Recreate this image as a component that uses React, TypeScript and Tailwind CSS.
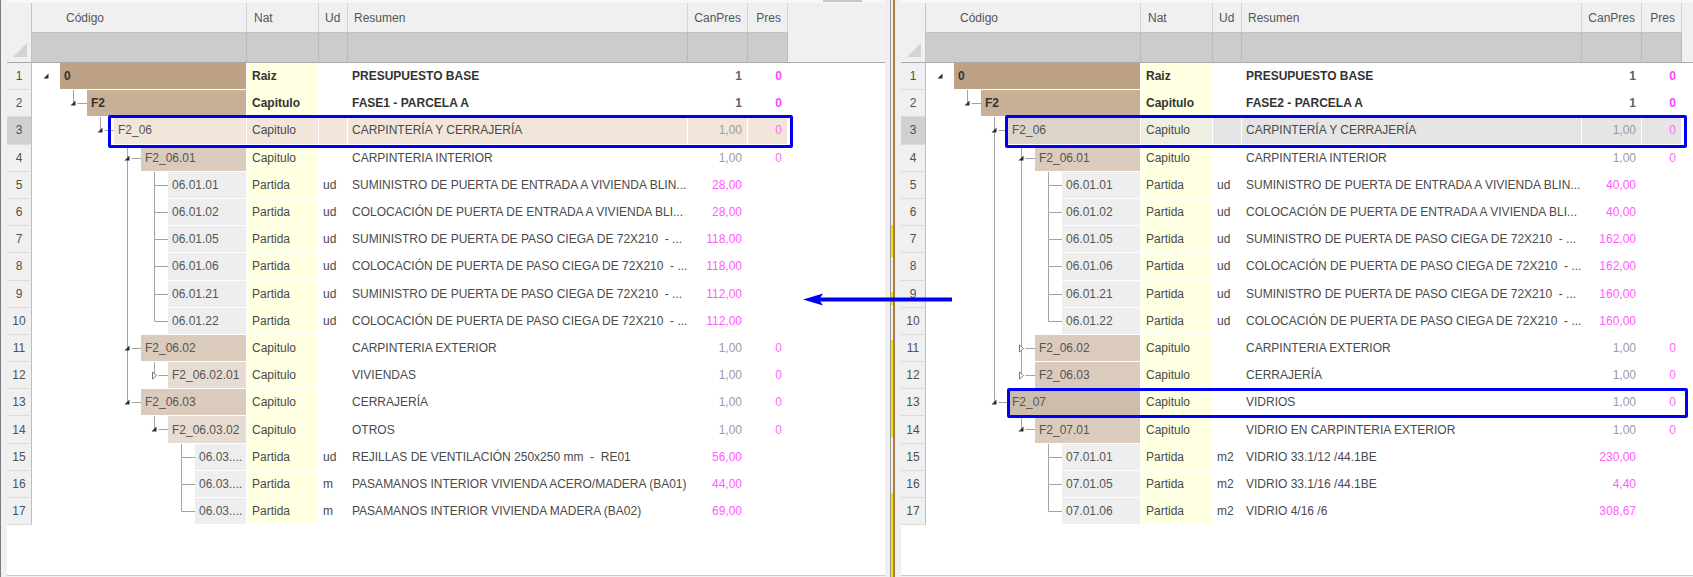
import React from "react";

type Row = {
  n: number;
  level: number;
  code: string;
  nat: string;
  ud?: string;
  res: string;
  can: string;
  pres?: string;
  part?: boolean;
  bold?: boolean;
  exp?: "open" | "closed";
  sel?: boolean;
};

const partidas = (
  level: number,
  start: number,
  items: [string, string, string, string][]
): Row[] =>
  items.map(([code, ud, res, can], i) => ({
    n: start + i,
    level,
    code,
    nat: "Partida",
    ud,
    res,
    can,
    part: true,
  }));

const puertas = (vals: string[]): [string, string, string, string][] => [
  ["06.01.01", "ud", "SUMINISTRO DE PUERTA DE ENTRADA A VIVIENDA BLIN...", vals[0]],
  ["06.01.02", "ud", "COLOCACIÓN DE PUERTA DE ENTRADA A VIVIENDA BLI...", vals[1]],
  ["06.01.05", "ud", "SUMINISTRO DE PUERTA DE PASO CIEGA DE 72X210  - ...", vals[2]],
  ["06.01.06", "ud", "COLOCACIÓN DE PUERTA DE PASO CIEGA DE 72X210  - ...", vals[3]],
  ["06.01.21", "ud", "SUMINISTRO DE PUERTA DE PASO CIEGA DE 72X210  - ...", vals[4]],
  ["06.01.22", "ud", "COLOCACIÓN DE PUERTA DE PASO CIEGA DE 72X210  - ...", vals[5]],
];

const leftRows: Row[] = [
  { n: 1, level: 0, code: "0", nat: "Raiz", res: "PRESUPUESTO BASE", can: "1", pres: "0", bold: true, exp: "open" },
  { n: 2, level: 1, code: "F2", nat: "Capitulo", res: "FASE1 - PARCELA A", can: "1", pres: "0", bold: true, exp: "open" },
  { n: 3, level: 2, code: "F2_06", nat: "Capitulo", res: "CARPINTERÍA Y CERRAJERÍA", can: "1,00", pres: "0", exp: "open", sel: true },
  { n: 4, level: 3, code: "F2_06.01", nat: "Capitulo", res: "CARPINTERIA INTERIOR", can: "1,00", pres: "0", exp: "open" },
  ...partidas(4, 5, puertas(["28,00", "28,00", "118,00", "118,00", "112,00", "112,00"])),
  { n: 11, level: 3, code: "F2_06.02", nat: "Capitulo", res: "CARPINTERIA EXTERIOR", can: "1,00", pres: "0", exp: "open" },
  { n: 12, level: 4, code: "F2_06.02.01", nat: "Capitulo", res: "VIVIENDAS", can: "1,00", pres: "0", exp: "closed" },
  { n: 13, level: 3, code: "F2_06.03", nat: "Capitulo", res: "CERRAJERÍA", can: "1,00", pres: "0", exp: "open" },
  { n: 14, level: 4, code: "F2_06.03.02", nat: "Capitulo", res: "OTROS", can: "1,00", pres: "0", exp: "open" },
  ...partidas(5, 15, [
    ["06.03....", "ud", "REJILLAS DE VENTILACIÓN 250x250 mm  -  RE01", "56,00"],
    ["06.03....", "m", "PASAMANOS INTERIOR VIVIENDA ACERO/MADERA (BA01)", "44,00"],
    ["06.03....", "m", "PASAMANOS INTERIOR VIVIENDA MADERA (BA02)", "69,00"],
  ]),
];

const rightRows: Row[] = [
  { n: 1, level: 0, code: "0", nat: "Raiz", res: "PRESUPUESTO BASE", can: "1", pres: "0", bold: true, exp: "open" },
  { n: 2, level: 1, code: "F2", nat: "Capitulo", res: "FASE2 - PARCELA A", can: "1", pres: "0", bold: true, exp: "open" },
  { n: 3, level: 2, code: "F2_06", nat: "Capitulo", res: "CARPINTERÍA Y CERRAJERÍA", can: "1,00", pres: "0", exp: "open", sel: true },
  { n: 4, level: 3, code: "F2_06.01", nat: "Capitulo", res: "CARPINTERIA INTERIOR", can: "1,00", pres: "0", exp: "open" },
  ...partidas(4, 5, puertas(["40,00", "40,00", "162,00", "162,00", "160,00", "160,00"])),
  { n: 11, level: 3, code: "F2_06.02", nat: "Capitulo", res: "CARPINTERIA EXTERIOR", can: "1,00", pres: "0", exp: "closed" },
  { n: 12, level: 3, code: "F2_06.03", nat: "Capitulo", res: "CERRAJERÍA", can: "1,00", pres: "0", exp: "closed" },
  { n: 13, level: 2, code: "F2_07", nat: "Capitulo", res: "VIDRIOS", can: "1,00", pres: "0", exp: "open" },
  { n: 14, level: 3, code: "F2_07.01", nat: "Capitulo", res: "VIDRIO EN CARPINTERIA EXTERIOR", can: "1,00", pres: "0", exp: "open" },
  ...partidas(4, 15, [
    ["07.01.01", "m2", "VIDRIO 33.1/12 /44.1BE", "230,00"],
    ["07.01.05", "m2", "VIDRIO 33.1/16 /44.1BE", "4,40"],
    ["07.01.06", "m2", "VIDRIO 4/16 /6", "308,67"],
  ]),
];

const levelBg = ["bg-[#bda286]", "bg-[#c8b097]", "bg-[#cebdab]", "bg-[#dacbbd]", "bg-[#e6dcd2]"];

function hasLater(rows: Row[], i: number) {
  for (let j = i + 1; j < rows.length; j++) {
    if (rows[j].level < rows[i].level) return false;
    if (rows[j].level === rows[i].level) return true;
  }
  return false;
}

function ancestor(rows: Row[], i: number, d: number) {
  for (let j = i; j >= 0; j--) if (rows[j].level <= d) return j;
  return 0;
}

// tree connector lines + expander glyph, drawn in the indent of the Código column
function Gutter({ rows, i }: { rows: Row[]; i: number }) {
  const row = rows[i];
  const L = row.level;
  const w = 28 + 27 * L;
  const h = 27;
  const mid = 13.5;
  const xs = (d: number) => 14 + 27 * d + 0.5;
  const lines: React.ReactNode[] = [];
  for (let d = 1; d < L; d++) {
    if (hasLater(rows, ancestor(rows, i, d)))
      lines.push(<line key={"v" + d} x1={xs(d)} y1={0} x2={xs(d)} y2={h + 1} />);
  }
  if (L >= 1) {
    const x = xs(L);
    lines.push(<line key="top" x1={x} y1={0} x2={x} y2={mid} />);
    if (hasLater(rows, i)) lines.push(<line key="bot" x1={x} y1={mid} x2={x} y2={h + 1} />);
    lines.push(<line key="tick" x1={row.exp ? x + 4 : x} y1={mid} x2={w} y2={mid} />);
  }
  const x = 14 + 27 * L;
  return (
    <svg width={w} height={h} className="shrink-0 overflow-visible">
      <g stroke="#a4a4a4" strokeWidth={1}>{lines}</g>
      {row.exp === "open" && (
        <polygon points={`${x + 2.5},${mid - 3} ${x + 2.5},${mid + 2} ${x - 2.5},${mid + 2}`} fill="#2e2e2e" />
      )}
      {row.exp === "closed" && (
        <polygon
          points={`${x - 1.5},${mid - 3.5} ${x + 2.5},${mid} ${x - 1.5},${mid + 3.5}`}
          fill="#ffffff"
          stroke="#7a7a7a"
          strokeWidth={1}
        />
      )}
    </svg>
  );
}

function DataRow({ rows, i, tone }: { rows: Row[]; i: number; tone: "peach" | "gray" }) {
  const r = rows[i];
  const codeBg = r.sel
    ? tone === "peach"
      ? "bg-[#f2e6da]"
      : "bg-[#dcd3c9]"
    : r.part
    ? "bg-[#eeeeee]"
    : levelBg[Math.min(r.level, 4)];
  const natBg = r.sel ? (tone === "peach" ? "bg-[#f2e6da]" : "bg-[#efefe1]") : "bg-[#ffffe1]";
  const restBg = r.sel ? (tone === "peach" ? "bg-[#f2e6da]" : "bg-[#e5e5e5]") : "bg-white";
  const txt = r.bold ? "font-bold text-[#333333]" : "text-[#4a4a4a]";
  const canTxt = r.part
    ? "text-[#ff5cff]"
    : r.bold
    ? "font-bold text-[#626262]"
    : "text-[#9c9c9c]";
  const presTxt = r.bold ? "font-bold text-[#ff44ff]" : "text-[#ff66ff]";
  return (
    <div className="flex h-[27.2px]">
      <div
        className={`flex w-[25px] items-center justify-center border-r border-b border-r-[#bdbdbd] border-b-[#dcdcdc] text-[#505050] ${
          r.sel ? "bg-[#d0d0d0]" : "bg-[#f0f0f0]"
        }`}
      >
        {r.n}
      </div>
      <div className="flex w-[215px]">
        <Gutter rows={rows} i={i} />
        <div
          className={`flex flex-1 items-center overflow-hidden whitespace-nowrap border-r border-b border-white pl-[4px] ${codeBg} ${
            r.bold ? "font-bold text-[#333333]" : "text-[#555555]"
          }`}
        >
          {r.code}
        </div>
      </div>
      <div className={`flex w-[72px] items-center border-r border-b border-white pl-[5px] ${natBg} ${txt}`}>{r.nat}</div>
      <div className={`flex w-[29px] items-center border-r border-b border-white pl-[4px] ${restBg} text-[#4a4a4a]`}>
        {r.ud}
      </div>
      <div
        className={`flex w-[340px] items-center overflow-hidden whitespace-pre border-r border-b border-white pl-[4px] ${restBg} ${txt}`}
      >
        {r.res}
      </div>
      <div className={`flex w-[60px] items-center justify-end border-r border-b border-white pr-[5px] ${restBg} ${canTxt}`}>
        {r.can}
      </div>
      <div className={`flex w-[40px] items-center justify-end border-r border-b border-white pr-[5px] ${restBg} ${presTxt}`}>
        {r.pres}
      </div>
      <div className="flex-1 bg-white" />
    </div>
  );
}

function Header() {
  const top = "flex h-[30px] items-center border-r border-b border-r-[#d6d6d6] border-b-[#c2c2c2] bg-[#f0f0f0] text-[#555555]";
  const bot = "h-[30px] border-r border-b border-r-[#b9b9b9] border-b-[#a9a9a9] bg-[#cccccc]";
  return (
    <div className="flex">
      <div className="h-[60px] w-[25px] border-r border-b border-r-[#c4c4c4] border-b-[#a9a9a9] bg-[#f0f0f0]">
        <svg width={24} height={59}>
          <polygon points="6,54 20,54 20,40" fill="#d3d3d3" />
        </svg>
      </div>
      <div className="flex flex-col">
        <div className="flex">
          <div className={`${top} w-[215px] pl-[34px]`}>Código</div>
          <div className={`${top} w-[72px] pl-[7px]`}>Nat</div>
          <div className={`${top} w-[29px] pl-[6px]`}>Ud</div>
          <div className={`${top} w-[340px] pl-[6px]`}>Resumen</div>
          <div className={`${top} w-[60px] justify-end pr-[6px]`}>CanPres</div>
          <div className={`${top} w-[40px] justify-end pr-[6px]`}>Pres</div>
        </div>
        <div className="flex">
          <div className={`${bot} w-[215px]`} />
          <div className={`${bot} w-[72px]`} />
          <div className={`${bot} w-[29px]`} />
          <div className={`${bot} w-[340px]`} />
          <div className={`${bot} w-[60px]`} />
          <div className={`${bot} w-[40px]`} />
        </div>
      </div>
      <div className="h-[60px] flex-1 border-b border-[#a9a9a9] bg-[#f0f0f0]" />
    </div>
  );
}

function Panel({ rows, tone, left }: { rows: Row[]; tone: "peach" | "gray"; left?: boolean }) {
  return (
    <div className={`flex h-full ${left ? "w-[885px] border-l border-[#7c7c7c]" : "flex-1"}`}>
      <div className="w-[6px] shrink-0 bg-[#f0f0f0]" />
      <div className="flex flex-1 flex-col bg-white">
        <div className="flex h-[3px] bg-[#f7f7f7]">
          {left && <div className="ml-[816px] h-[2px] w-[39px] bg-[#c6c6c6]" />}
        </div>
        <Header />
        {rows.map((_, i) => (
          <DataRow key={i} rows={rows} i={i} tone={tone} />
        ))}
        <div className="flex-1 bg-white" />
        <div className="h-[2px] border-t border-[#cbcbcb] bg-[#f0f0f0]" />
      </div>
    </div>
  );
}

function Divider() {
  return (
    <div className="flex h-full w-[10px] shrink-0">
      <div className="w-[5px] bg-[#eeeeee]" />
      <div className="w-[1px] bg-[#9a9a9a]" />
      <div className="flex w-[2px] flex-col bg-[#f7f1dc]">
        <div className="h-[225px]" />
        <div className="h-[32px] bg-[#f2e200]" />
        <div className="h-[35px]" />
        <div className="h-[13px] bg-[#f2e200]" />
        <div className="h-[35px]" />
        <div className="h-[97px] bg-[#f2e200]" />
        <div className="h-[56px]" />
        <div className="flex-1 bg-[#f2e200]" />
      </div>
      <div className="w-[2px] bg-[#a97c50]" />
    </div>
  );
}

export default function App() {
  return (
    <div className="relative flex h-[577px] w-[1693px] overflow-hidden bg-white font-['Liberation_Sans',Arial,sans-serif] text-[12px]">
      <Panel rows={leftRows} tone="peach" left />
      <Divider />
      <Panel rows={rightRows} tone="gray" />

      {/* annotation boxes */}
      <div className="absolute left-[108px] top-[115px] h-[33px] w-[685px] rounded-[2px] border-[3px] border-[#0000f0]" />
      <div className="absolute left-[1005px] top-[115px] h-[33px] w-[682px] rounded-[2px] border-[3px] border-[#0000f0]" />
      <div className="absolute left-[1007px] top-[388px] h-[30px] w-[681px] rounded-[2px] border-[3px] border-[#0000f0]" />

      {/* arrow */}
      <svg className="absolute left-[800px] top-[289px]" width={155} height={22}>
        <line x1={18} y1={10.5} x2={152} y2={10.5} stroke="#0000f0" strokeWidth={4} />
        <polygon points="3,10.5 23,4.5 19,10.5 23,16.5" fill="#0000f0" />
      </svg>
    </div>
  );
}
